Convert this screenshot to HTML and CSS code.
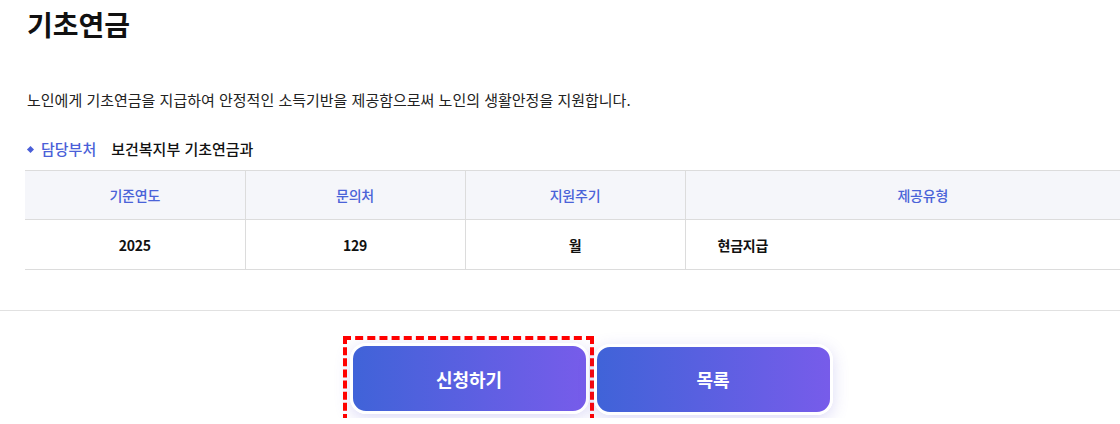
FILE: index.html
```html
<!DOCTYPE html>
<html lang="ko">
<head>
    <meta charset="utf-8" />
    <title>기초연금</title>
    <link rel="stylesheet" href="styles.css">
</head>
<body>
    <div class="page">
        <h1 class="title">기초연금</h1>
        <p class="desc">노인에게 기초연금을 지급하여 안정적인 소득기반을 제공함으로써 노인의 생활안정을 지원합니다.</p>
        <div class="dept">
            <span class="dept-label">담당부처</span>
            <span class="dept-name">보건복지부 기초연금과</span>
        </div>
        <table class="info">
            <colgroup>
                <col class="c-year">
                <col class="c-tel">
                <col class="c-cycle">
                <col>
            </colgroup>
            <thead>
                <tr>
                    <th>기준연도</th>
                    <th>문의처</th>
                    <th>지원주기</th>
                    <th class="last">제공유형</th>
                </tr>
            </thead>
            <tbody>
                <tr>
                    <td>2025</td>
                    <td>129</td>
                    <td>월</td>
                    <td class="left">현금지급</td>
                </tr>
            </tbody>
        </table>
    </div>
    <hr class="divider">
    <div class="btns">
        <span class="focus-ring"><button type="button" class="btn">신청하기</button></span>
        <button type="button" class="btn">목록</button>
    </div>
</body>
</html>
```

FILE: styles.css
```css
html, body {
    margin: 0;
    padding: 0;
    background: #fff;
    overflow: hidden;
}

body {
    font-family: "Noto Sans CJK KR", "Noto Sans", sans-serif;
    color: #111;
}

.page {
    padding-left: 25px;
}

.title {
    margin: 0;
    padding: 4px 0 0 2px;
    font-size: 28px;
    line-height: 40px;
    font-weight: 700;
}

.desc {
    margin: 45px 0 0 2px;
    font-size: 15px;
    line-height: 22px;
    color: #222;
}

.dept {
    margin-top: 27px;
    display: flex;
    align-items: center;
    font-size: 15px;
    line-height: 22px;
    font-weight: 500;
}

.dept-label {
    position: relative;
    padding-left: 16px;
    color: #4a5fd8;
}

.dept-label::before {
    content: "";
    position: absolute;
    left: 3px;
    top: 9px;
    width: 5px;
    height: 5px;
    background: #4a5fd8;
    transform: rotate(45deg);
}

.dept-name {
    margin-left: 15px;
    color: #111;
}

.info {
    margin-top: 10px;
    width: 100%;
    border-collapse: collapse;
    border-spacing: 0;
    table-layout: fixed;
    border-top: 1px solid #dcdcdc;
}

.info .c-year,
.info .c-tel,
.info .c-cycle {
    width: 220px;
}

.info th, .info td {
    border-bottom: 1px solid #dcdcdc;
    border-left: 1px solid #dcdcdc;
    text-align: center;
    font-size: 14px;
    letter-spacing: -0.2px;
    padding: 0;
}

.info th:first-child, .info td:first-child {
    border-left: none;
}

.info th {
    height: 48px;
    background: #f5f6fa;
    color: #4a63d8;
    font-weight: 500;
}

.info th.last {
    padding-left: 40px;
}

.info td {
    height: 49px;
    font-weight: 600;
    color: #111;
}

.info td.left {
    text-align: left;
    padding-left: 32px;
}

.divider {
    margin: 40px 0 0;
    border: none;
    border-top: 1px solid #e1e1e1;
}

.btns {
    margin-top: 29px;
    padding-left: 59px;
    display: flex;
    justify-content: center;
    align-items: center;
    gap: 4px;
}

.focus-ring {
    display: block;
    padding: 3px 1px 4px 3px;
    outline: 4px dashed #f00;
}

.btn {
    display: block;
    width: 239px;
    height: 71px;
    border: 3px solid #fff;
    border-radius: 16px;
    background: linear-gradient(90deg, #4063d8, #775cea);
    box-shadow: 0 4px 16px rgba(95, 85, 215, 0.22);
    color: #fff;
    font-family: inherit;
    font-size: 18px;
    font-weight: 700;
    cursor: pointer;
}
```
